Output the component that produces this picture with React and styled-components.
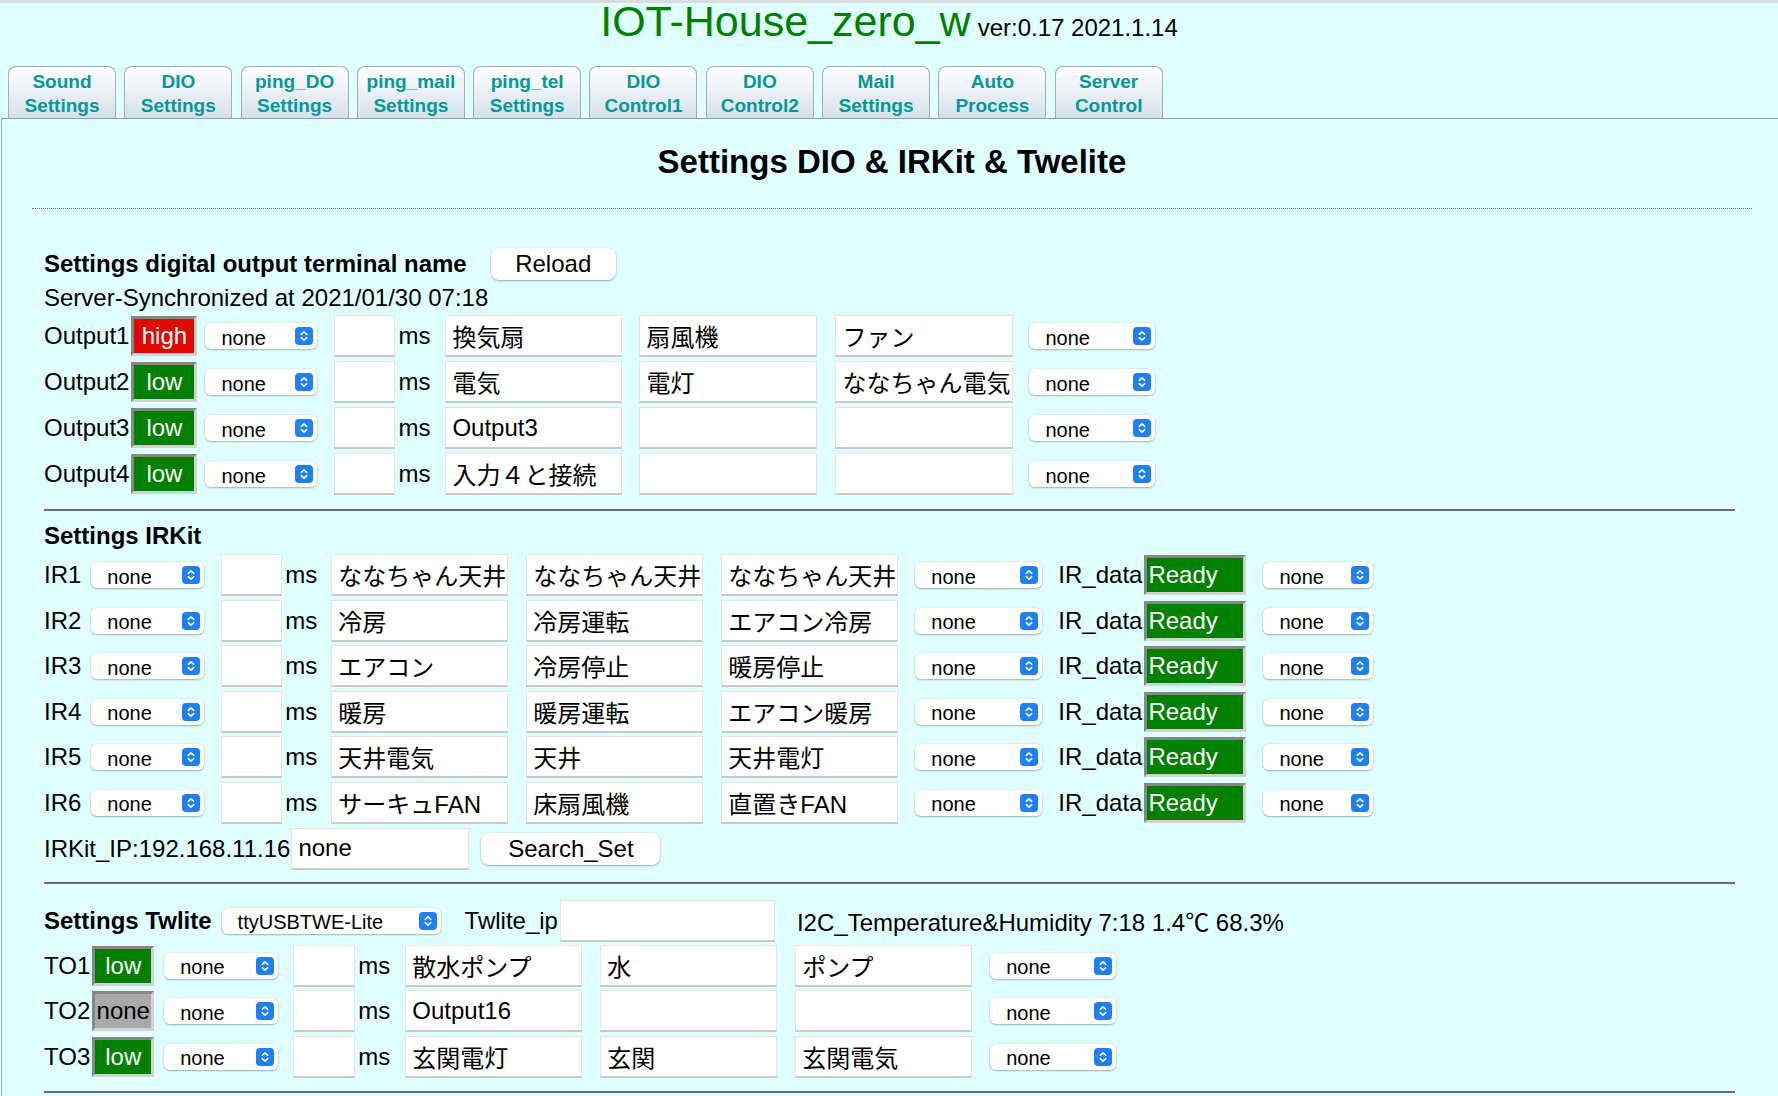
import React from 'react'
import styled, { createGlobalStyle } from 'styled-components'

const GlobalStyle = createGlobalStyle`
  html, body {
    margin: 0;
    padding: 0;
    background: #e0ffff;
  }
  body {
    font-family: "Liberation Sans", Arial, "Noto Sans CJK JP", sans-serif;
    font-size: 24px;
    color: #000;
    overflow: hidden;
  }
`

const FONT = `"Liberation Sans", Arial, "Noto Sans CJK JP", sans-serif`

const TopStrip = styled.div`
  height: 3px;
  background: #d8dede;
`

const Header = styled.div`
  height: 36px;
  text-align: center;
  line-height: 36px;
  margin-bottom: 27px;
  white-space: nowrap;
`

const Title = styled.span`
  font-size: 43px;
  color: #008000;
`

const Version = styled.span`
  font-size: 24px;
  margin-left: 7px;
`

const TabBar = styled.div`
  display: flex;
  gap: 8.3px;
  padding-left: 8px;
`

const Tab = styled.div`
  box-sizing: border-box;
  width: 108px;
  height: 52px;
  border: 1px solid #a4adb5;
  border-bottom: none;
  border-radius: 8px 8px 0 0;
  background: linear-gradient(#ffffff, #d5e1ea);
  color: #009a9a;
  font-weight: bold;
  font-size: 19px;
  line-height: 24px;
  text-align: center;
  padding-top: 3px;
`

const Panel = styled.div`
  margin-left: 1px;
  border-top: 1px solid #9a9a9a;
  border-left: 1px solid #98a8b0;
  padding: 0 26px 60px 30px;
`

const PageHeading = styled.h1`
  margin: 23px 0 0;
  font-size: 33px;
  line-height: 40px;
  font-weight: bold;
  text-align: center;
`

const DottedRule = styled.div`
  margin-top: 26px;
  border-top: 1px dotted #5f5ff5;
`

const Section = styled.div`
  padding: 0 17px 0 12px;
`

const HeadRow = styled.div`
  display: flex;
  align-items: center;
  height: ${p => p.$h || 34}px;
  margin-top: ${p => p.$mt || 0}px;
  white-space: nowrap;
`

const SubHead = styled.span`
  font-weight: bold;
  font-size: 24px;
`

const Line = styled.div`
  line-height: 30px;
  height: 30px;
  margin-top: ${p => p.$mt || 0}px;
  white-space: nowrap;
`

const Rows = styled.div`
  display: flex;
  flex-direction: column;
  gap: ${p => p.$gap}px;
  margin-top: ${p => p.$mt || 0}px;
`

const Row = styled.div`
  display: flex;
  align-items: center;
  height: 42px;
  white-space: nowrap;
`

const Label = styled.span`
  margin-left: ${p => p.$ml || 0}px;
`

const StateBox = styled.span`
  box-sizing: border-box;
  width: ${p => p.$w}px;
  height: 40px;
  margin-left: 2px;
  border: 3px solid;
  border-color: #878787 #d2d2d2 #d2d2d2 #878787;
  background: ${p => p.$bg};
  color: ${p => p.$fg};
  line-height: 34px;
  text-align: ${p => p.$align || 'center'};
  padding: 0 ${p => (p.$align === 'left' ? 1 : 0)}px;
`

const SelectBox = styled.div`
  box-sizing: border-box;
  width: ${p => p.$w}px;
  height: 26px;
  margin-left: ${p => p.$ml || 0}px;
  display: flex;
  align-items: center;
  justify-content: space-between;
  padding: 0 4px 0 16px;
  background: #fff;
  border-radius: 6px;
  box-shadow: 0 1px 2px rgba(0, 0, 0, 0.28), 0 0 0 0.5px rgba(0, 0, 0, 0.08);
  font-size: 20px;
  line-height: 26px;
  padding-top: 3px;
`

const Stepper = styled.svg`
  flex: none;
  margin-top: -3px;
`

const TextField = styled.input`
  box-sizing: border-box;
  width: ${p => p.$w}px;
  height: 42px;
  margin: 0 0 0 ${p => p.$ml || 0}px;
  padding: 0 0 0 6px;
  background: #fff;
  border: 1px solid #e4e4e4;
  border-bottom: 2px solid #c9c9c9;
  border-radius: 0;
  font-family: ${FONT};
  font-size: 24px;
  color: #000;
  outline: none;
`

const Button = styled.button`
  box-sizing: border-box;
  width: ${p => p.$w}px;
  height: 32px;
  margin-left: ${p => p.$ml || 0}px;
  border: none;
  border-radius: 8px;
  background: #fff;
  box-shadow: 0 1px 2px rgba(0, 0, 0, 0.3), 0 0 0 0.5px rgba(0, 0, 0, 0.08);
  font-family: ${FONT};
  font-size: 24px;
  color: #000;
  padding: 0;
`

const Rule = styled.div`
  margin-top: ${p => p.$mt}px;
  border-top: 2px solid #6c6c6c;
`

const Select = ({ w, ml, children }) => (
  <SelectBox $w={w} $ml={ml}>
    <span>{children}</span>
    <Stepper width="18" height="18" viewBox="0 0 18 18">
      <rect width="18" height="18" rx="4" fill="#1f7ff5" />
      <path
        d="M6.3 7.3 L9 4.8 L11.7 7.3 M6.3 10.7 L9 13.2 L11.7 10.7"
        stroke="#fff"
        strokeWidth="1.6"
        fill="none"
        strokeLinecap="round"
        strokeLinejoin="round"
      />
    </Stepper>
  </SelectBox>
)

const STATE = {
  high: { bg: '#dc0a00', fg: '#fff' },
  low: { bg: '#008000', fg: '#fff' },
  none: { bg: '#a9a9a9', fg: '#000' },
  Ready: { bg: '#008000', fg: '#fff' },
}

const tabs = [
  ['Sound', 'Settings'],
  ['DIO', 'Settings'],
  ['ping_DO', 'Settings'],
  ['ping_mail', 'Settings'],
  ['ping_tel', 'Settings'],
  ['DIO', 'Control1'],
  ['DIO', 'Control2'],
  ['Mail', 'Settings'],
  ['Auto', 'Process'],
  ['Server', 'Control'],
]

const outputs = [
  ['Output1', 'high', ['換気扇', '扇風機', 'ファン']],
  ['Output2', 'low', ['電気', '電灯', 'ななちゃん電気']],
  ['Output3', 'low', ['Output3', '', '']],
  ['Output4', 'low', ['入力４と接続', '', '']],
]

const irs = [
  ['IR1', ['ななちゃん天井', 'ななちゃん天井', 'ななちゃん天井']],
  ['IR2', ['冷房', '冷房運転', 'エアコン冷房']],
  ['IR3', ['エアコン', '冷房停止', '暖房停止']],
  ['IR4', ['暖房', '暖房運転', 'エアコン暖房']],
  ['IR5', ['天井電気', '天井', '天井電灯']],
  ['IR6', ['サーキュFAN', '床扇風機', '直置きFAN']],
]

const twelites = [
  ['TO1', 'low', ['散水ポンプ', '水', 'ポンプ']],
  ['TO2', 'none', ['Output16', '', '']],
  ['TO3', 'low', ['玄関電灯', '玄関', '玄関電気']],
]

const State = ({ value, w, align }) => (
  <StateBox $w={w} $bg={STATE[value].bg} $fg={STATE[value].fg} $align={align}>
    {value}
  </StateBox>
)

export default function App() {
  return (
    <>
      <GlobalStyle />
      <TopStrip />
      <Header>
        <Title>IOT-House_zero_w</Title>
        <Version>ver:0.17 2021.1.14</Version>
      </Header>
      <TabBar>
        {tabs.map(([a, b], i) => (
          <Tab key={i}>
            {a}
            <br />
            {b}
          </Tab>
        ))}
      </TabBar>
      <Panel>
        <PageHeading>Settings DIO &amp; IRKit &amp; Twelite</PageHeading>
        <DottedRule />
        <Section>
          <HeadRow $mt={38}>
            <SubHead>Settings digital output terminal name</SubHead>
            <Button $w={125} $ml={24}>Reload</Button>
          </HeadRow>
          <Line $mt={2}>Server-Synchronized at 2021/01/30 07:18</Line>
          <Rows $gap={4} $mt={2}>
            {outputs.map(([name, st, names]) => (
              <Row key={name}>
                <Label>{name}</Label>
                <State value={st} w={66} />
                <Select w={112} ml={8}>none</Select>
                <TextField $w={61} $ml={17} readOnly defaultValue="" />
                <Label $ml={3}>ms</Label>
                <TextField $w={177} $ml={15} readOnly defaultValue={names[0]} />
                <TextField $w={178} $ml={17} readOnly defaultValue={names[1]} />
                <TextField $w={178} $ml={18} readOnly defaultValue={names[2]} />
                <Select w={126} ml={16}>none</Select>
              </Row>
            ))}
          </Rows>
          <Rule $mt={14} />

          <Line $mt={10}>
            <SubHead>Settings IRKit</SubHead>
          </Line>
          <Rows $gap={3.6} $mt={3}>
            {irs.map(([name, names]) => (
              <Row key={name}>
                <Label>{name}</Label>
                <Select w={113} ml={10}>none</Select>
                <TextField $w={61} $ml={17} readOnly defaultValue="" />
                <Label $ml={3}>ms</Label>
                <TextField $w={177} $ml={14} readOnly defaultValue={names[0]} />
                <TextField $w={177} $ml={18} readOnly defaultValue={names[1]} />
                <TextField $w={177} $ml={18} readOnly defaultValue={names[2]} />
                <Select w={127} ml={17}>none</Select>
                <Label $ml={16}>IR_data</Label>
                <State value="Ready" w={102} align="left" />
                <Select w={110} ml={17}>none</Select>
              </Row>
            ))}
            <Row>
              <Label>IRKit_IP:192.168.11.16</Label>
              <TextField $w={178} $ml={1} readOnly defaultValue="none" />
              <Button $w={179} $ml={12}>Search_Set</Button>
            </Row>
          </Rows>
          <Rule $mt={12} />

          <HeadRow $h={42} $mt={16}>
            <SubHead>Settings Twlite</SubHead>
            <Select w={219} ml={10}>ttyUSBTWE-Lite</Select>
            <Label $ml={24}>Twlite_ip</Label>
            <TextField $w={215} $ml={2} readOnly defaultValue="" />
            <Label $ml={22}>I2C_Temperature&amp;Humidity 7:18 1.4℃ 68.3%</Label>
          </HeadRow>
          <Rows $gap={3.5} $mt={3}>
            {twelites.map(([name, st, names]) => (
              <Row key={name}>
                <Label>{name}</Label>
                <State value={st} w={62} />
                <Select w={114} ml={10}>none</Select>
                <TextField $w={62} $ml={15} readOnly defaultValue="" />
                <Label $ml={3}>ms</Label>
                <TextField $w={177} $ml={15} readOnly defaultValue={names[0]} />
                <TextField $w={177} $ml={18} readOnly defaultValue={names[1]} />
                <TextField $w={177} $ml={18} readOnly defaultValue={names[2]} />
                <Select w={126} ml={18}>none</Select>
              </Row>
            ))}
          </Rows>
          <Rule $mt={13} />
        </Section>
      </Panel>
    </>
  )
}
